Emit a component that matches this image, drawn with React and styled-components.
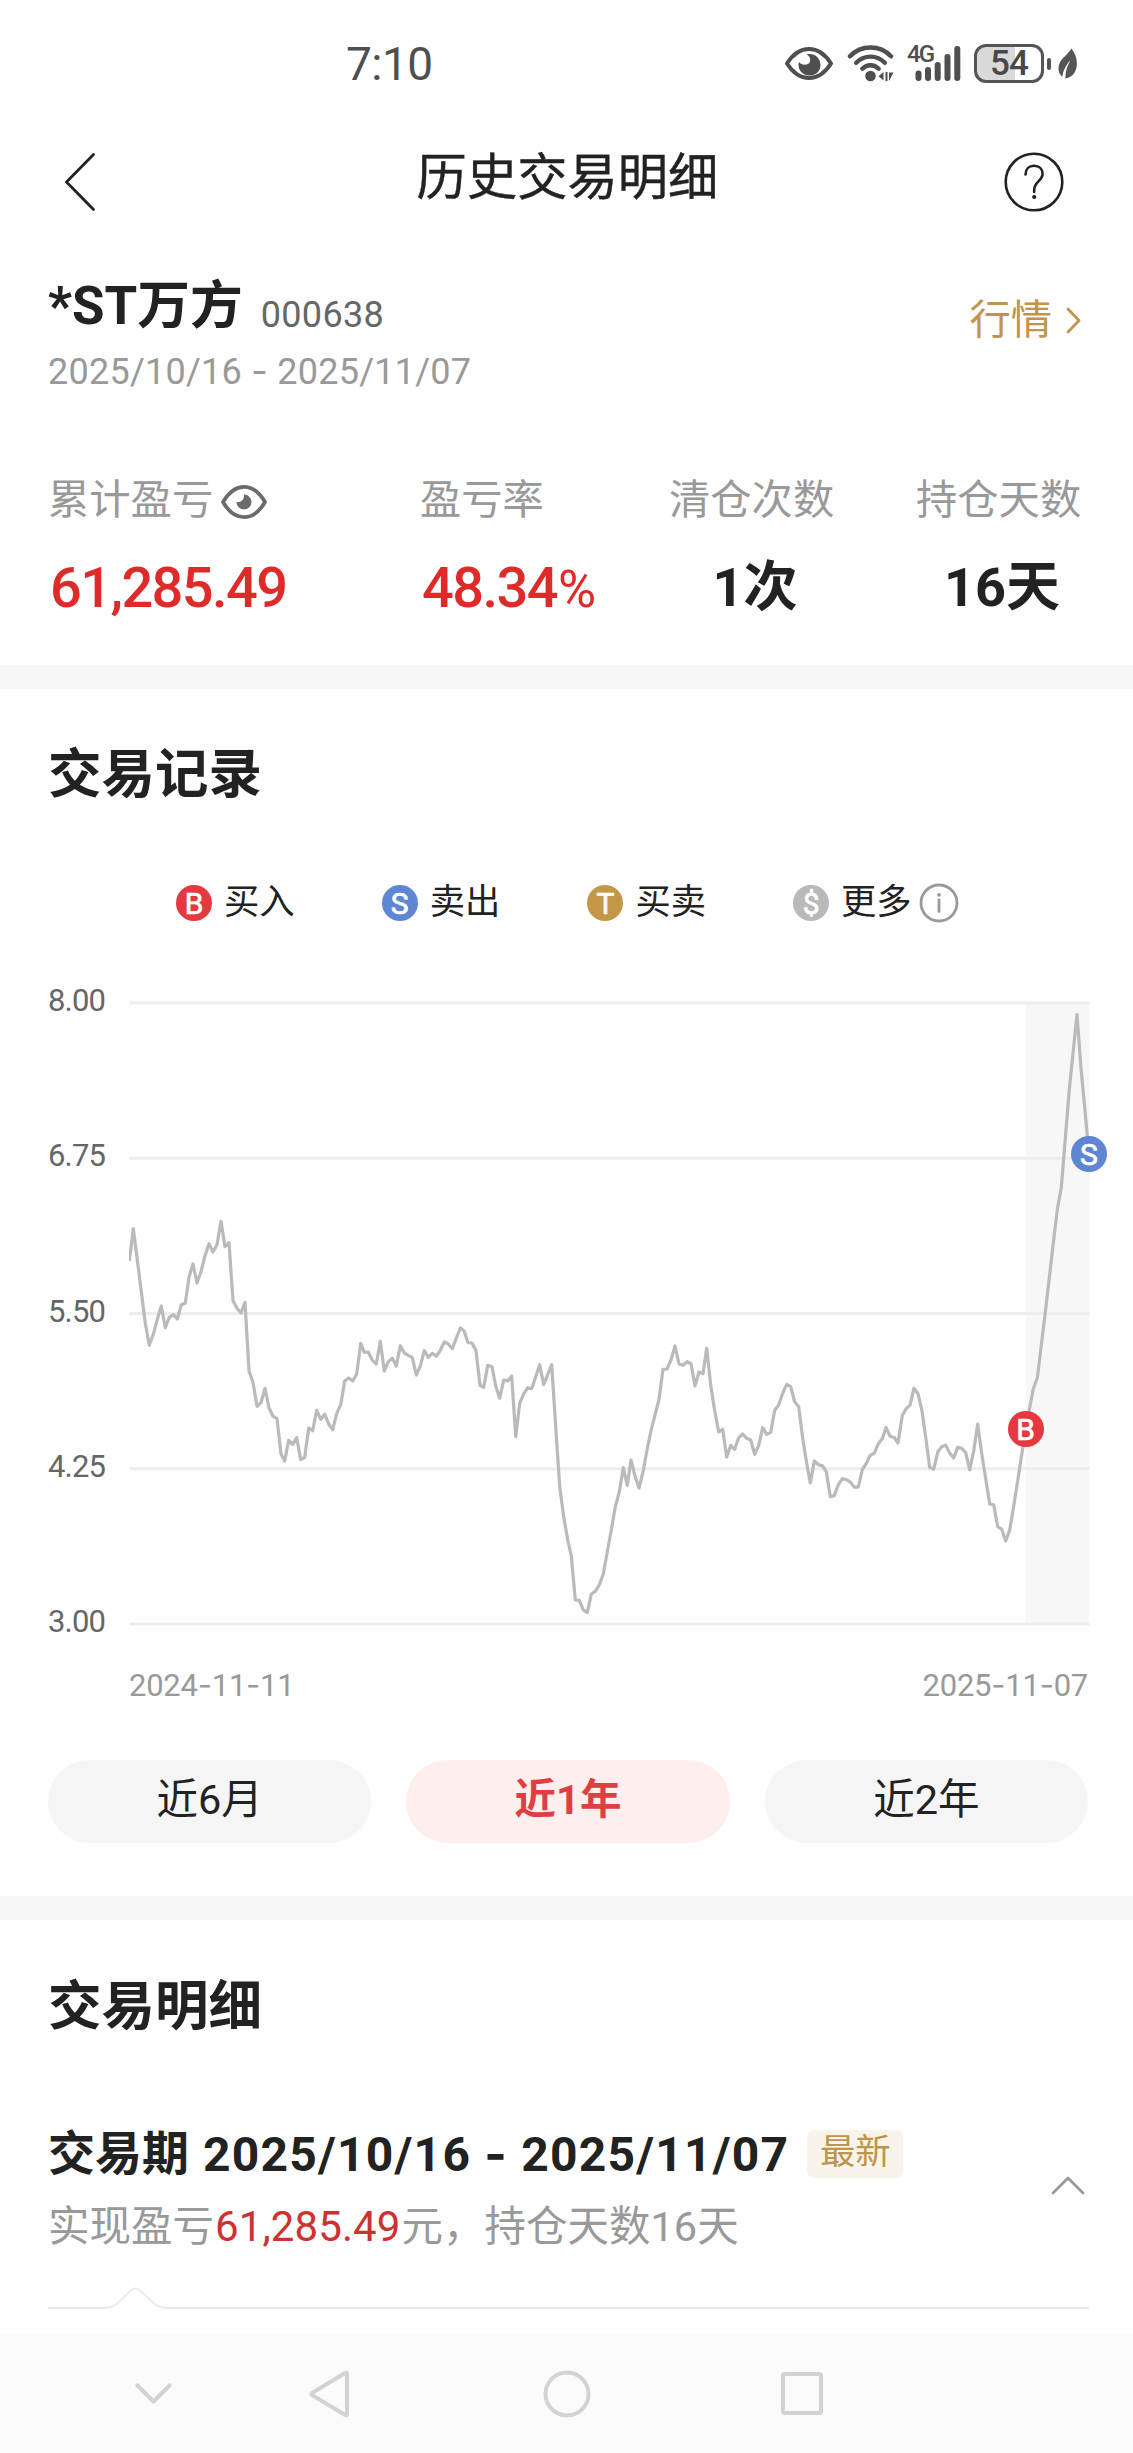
import React from 'react';
import styled, { createGlobalStyle, css } from 'styled-components';

const Global = createGlobalStyle`
  body {
    margin: 0;
    background: #fefefe;
  }
  * {
    box-sizing: border-box;
  }
`;

const Screen = styled.div`
  width: 1133px;
  height: 2453px;
  overflow: hidden;
  display: flex;
  flex-direction: column;
  background: #fefefe;
  color: #222;
  font-family: Roboto, 'Noto Sans CJK SC', sans-serif;
  white-space: nowrap;
  svg {
    display: block;
    flex: none;
  }
`;

const Dash = styled.span`
  font-family: Inter, sans-serif;
`;

/* ---------- status bar ---------- */

const StatusBar = styled.div`
  height: 127px;
  padding: 0 55px 0 346px;
  display: flex;
  align-items: center;
  justify-content: space-between;
  color: #4f4f4f;
`;

const Clock = styled.div`
  font-size: 46px;
  line-height: 54px;
  letter-spacing: -0.5px;
`;

const StatusIcons = styled.div`
  display: flex;
  align-items: center;
`;

const Signal = styled.div`
  display: flex;
  margin-left: 13px;
`;

const Network = styled.span`
  font-size: 24px;
  font-weight: 500;
  line-height: 18px;
  letter-spacing: -1.8px;
  width: 8px;
`;

const Battery = styled.div`
  margin-left: 13px;
  width: 70px;
  height: 39px;
  border: 3px solid #555;
  border-radius: 12px;
  background: linear-gradient(90deg, #d9d9d9 0 38px, #fefefe 38px);
  display: flex;
  align-items: center;
  justify-content: center;
  font-size: 35px;
  font-weight: 500;
  line-height: 33px;
  letter-spacing: -0.8px;
  color: #484848;
`;

const BatteryNub = styled.div`
  width: 4px;
  height: 12px;
  margin: 0 7px 0 3px;
  border-radius: 2px;
  background: #555;
`;

/* ---------- title bar ---------- */

const TitleBar = styled.div`
  height: 109px;
  padding: 0 69px 0 64px;
  display: grid;
  grid-template-columns: 200px 1fr 200px;
  align-items: center;
  svg:last-child {
    justify-self: end;
  }
`;

const Title = styled.h1`
  margin: -8px 0 0 7px;
  font-size: 50.3px;
  line-height: 60px;
  font-weight: 400;
  text-align: center;
  -webkit-text-stroke: 0.4px #222;
`;

/* ---------- stock summary ---------- */

const Summary = styled.section`
  height: 429px;
  padding: 40px 48px 0;
`;

const SummaryTop = styled.div`
  display: flex;
  justify-content: space-between;
`;

const StockLine = styled.div`
  display: flex;
  align-items: center;
  height: 60px;
  line-height: 60px;
`;

const StockName = styled.div`
  font-size: 52.8px;
  font-weight: 700;
`;

const StockCode = styled.div`
  margin: 17px 0 0 18px;
  font-size: 36px;
  letter-spacing: 0.3px;
  color: #666;
`;

const Period = styled.div`
  margin-top: 15px;
  font-size: 36px;
  line-height: 40px;
  letter-spacing: 0.25px;
  color: #999;
`;

const QuoteLink = styled.div`
  display: flex;
  align-items: center;
  gap: 14px;
  height: 60px;
  margin: 14px 4px 0 0;
  font-size: 41.3px;
  line-height: 60px;
  color: #bf944d;
`;

const Stats = styled.div`
  margin-top: 83px;
  display: grid;
  grid-template-columns: 372px 249px 247px 166px;
`;

const Stat = styled.div`
  display: flex;
  flex-direction: column;
  align-items: ${(p) => (p.$center ? 'center' : 'flex-start')};
  width: fit-content;
`;

const StatLabel = styled.div`
  height: 50px;
  display: flex;
  align-items: center;
  gap: 8px;
  font-size: 41.3px;
  line-height: 50px;
  color: #999;
  svg {
    margin-top: 3px;
  }
`;

const StatValue = styled.div`
  margin-top: 32px;
  height: 62px;
  line-height: 62px;
  padding-left: 7px;
  font-size: 54px;
  font-weight: 700;
  ${(p) =>
    p.$gain &&
    css`
      padding-left: 2px;
      font-size: 56px;
      font-weight: 500;
      letter-spacing: -1.6px;
      color: #df2a2a;
    `}
`;

const Percent = styled.span`
  font-size: 52px;
  font-weight: 400;
  margin-left: 1px;
`;

const Divider = styled.div`
  height: 24px;
  flex: none;
  background: #f7f7f7;
`;

/* ---------- trade chart ---------- */

const Records = styled.section`
  height: 1207px;
  padding: 55px 44px 0 48px;
`;

const SectionTitle = styled.h2`
  margin: 0;
  font-size: 53.5px;
  line-height: 62px;
  font-weight: 700;
`;

const Legend = styled.div`
  margin: 77px 0 0 128px;
  height: 40px;
  display: flex;
  align-items: center;
`;

const LegendItem = styled.div`
  width: 205.7px;
  display: flex;
  align-items: center;
  font-size: 35.3px;
  line-height: 40px;
`;

const Dot = styled.span`
  width: 36px;
  height: 36px;
  flex: none;
  border-radius: 50%;
  background: ${(p) => p.$color};
  color: #fff;
  font-size: 30px;
  line-height: 37px;
  font-weight: 400;
  text-align: center;
  -webkit-text-stroke: 0.7px #fff;
`;

const LegendText = styled.span`
  margin: -3px 7px 0 12px;
`;

const ChartBody = styled.div`
  position: relative;
  margin-top: 60px;
  height: 660px;
  display: flex;
`;

const Axis = styled.div`
  width: 81px;
  height: 657px;
  flex: none;
  display: flex;
  flex-direction: column;
  justify-content: space-between;
  font-size: 31px;
  line-height: 36px;
  letter-spacing: -0.8px;
  color: #666;
`;

const Marker = styled(Dot)`
  position: absolute;
  left: ${(p) => p.$x - 66}px;
  top: ${(p) => p.$y - 1001}px;
`;

const DateRow = styled.div`
  margin: 24px 0 0 81px;
  width: 959px;
  display: flex;
  justify-content: space-between;
  font-size: 31px;
  line-height: 36px;
  letter-spacing: -0.25px;
  color: #999;
`;

const Ranges = styled.div`
  margin-top: 56px;
  width: 1040px;
  display: grid;
  grid-template-columns: repeat(3, 1fr);
  gap: 35px;
`;

const Range = styled.button`
  height: 83px;
  padding: 0 0 3px;
  border: 0;
  border-radius: 42px;
  font: inherit;
  font-size: 41.5px;
  line-height: 60px;
  font-weight: ${(p) => (p.$active ? 700 : 400)};
  color: ${(p) => (p.$active ? '#dd3f43' : '#222')};
  background: ${(p) => (p.$active ? '#ffeeee' : '#f5f5f5')};
`;

/* ---------- trade details ---------- */

const Details = styled.section`
  height: 414px;
  padding: 56px 44px 0 48px;
`;

const Trade = styled.div`
  margin-top: 84px;
  height: 158px;
  padding-right: 4px;
  display: flex;
  justify-content: space-between;
`;

const TradeHead = styled.div`
  height: 64px;
  display: flex;
  align-items: center;
  font-size: 47px;
  line-height: 64px;
  font-weight: 700;
`;

const TradeDates = styled.span`
  margin-left: 14px;
  font-size: 48px;
  letter-spacing: 1.22px;
`;

const Badge = styled.span`
  margin-left: 18px;
  width: 96px;
  height: 48px;
  border-radius: 7px;
  background: #f8f4ec;
  color: #bf944d;
  font-size: 35.4px;
  line-height: 45px;
  font-weight: 400;
  text-align: center;
`;

const TradeNote = styled.div`
  margin-top: 15px;
  font-size: 41.5px;
  line-height: 52px;
  color: #999;
`;

const Profit = styled.span`
  margin: 0 1px;
  font-size: 42px;
  letter-spacing: 0.1px;
  color: #cd3130;
`;

const Toggle = styled.div`
  padding-top: 53px;
`;

/* ---------- navigation ---------- */

const NavBar = styled.nav`
  flex: 1;
  padding-left: 135px;
  display: grid;
  grid-template-columns: 174px 233.5px 238.5px 42px;
  align-items: center;
  background: #fbfbfb;
`;

const segments = [
  {
    x: 100, y: 1180, ky: 3,
    points: '88,243 100,146 112,240 124,335 136,430 148,496 160,463 172,418 184,378 196,443 208,412 220,404 232,417 244,374 256,370 267,292 279,252 291,309 303,275 315,227 327,191 339,216 351,194 363,124 375,200 387,188 399,362 411,385 423,399 435,367 447,573 459,607 471,679 483,668 495,625 507,684 519,709 531,716 543,822 554,843 566,781 578,793 590,773 602,839 614,832 626,744 638,752 650,691 662,718 674,703 686,732 698,749 710,701 722,674 734,603 746,594 758,603 770,582 782,490 793,517 805,516 817,541 829,552 841,484 853,573 865,545 877,535 889,558 901,497 913,519 925,526 937,533 949,585 961,558 973,512 985,532 997,520 1009,529 1021,511 1033,486 1045,492 1057,506 1069,474 1081,444',
  },
  {
    x: 460, y: 1280, ky: 3,
    points: '12,152 24,188 36,189 48,212 60,316 71,322 83,256 96,260 107,318 119,355 131,300 143,303 155,288 167,470 179,370 191,342 203,323 215,326 239,254 251,314 275,254 287,440 299,620 311,710 323,780 334,828 346,960 358,961 370,990 382,998 394,942 406,934 418,915 430,882 442,815 454,750 466,680 478,636 490,563 502,616 513,540 525,588 537,624 549,576 561,510 573,452 597,358 609,268 621,267 633,240 645,198 657,252 669,256 681,245 693,251 705,318 717,276 729,281 740,205 752,315 764,392 776,456 788,448 800,531 812,496 824,508 836,473 848,462 860,475 872,480 884,523 896,496 908,443 920,463 932,457 944,391 956,375 968,340 980,313 992,320 1004,366 1016,380 1028,475 1040,550 1051,609',
  },
  {
    x: 780, y: 980, ky: 2.376,
    points: '103,1143 115,1151 128,1155 139,1168 151,1228 163,1225 175,1199 187,1185 199,1187 211,1193 223,1205 235,1205 247,1163 258,1150 270,1130 283,1124 295,1102 307,1090 318,1063 330,1084 343,1087 354,1100 367,1035 378,1019 390,1010 402,970 414,983 426,1024 438,1092 449,1158 461,1162 474,1120 485,1109 497,1105 509,1124 521,1136 533,1110 545,1113 557,1123 569,1164 581,1119 593,1055 605,1125 617,1185 629,1245 641,1247 653,1299 665,1305 677,1333 689,1307 701,1250 713,1190 725,1128 737,1066 760,971 772,946 796,790 820,625 832,545 844,493 868,260 891,82 903,210 915,310 927,414',
  },
];

const priceLine = segments
  .flatMap(({ x, y, ky, points }) =>
    points.split(' ').map((pair) => {
      const [px, py] = pair.split(',').map(Number);
      return `${(x + px / 3).toFixed(1)},${(y + py / ky).toFixed(1)}`;
    }),
  )
  .join(' ');

const gridLines = [1003, 1158.3, 1313.5, 1468.7, 1624];
const prices = ['8.00', '6.75', '5.50', '4.25', '3.00'];

const legend = [
  { mark: 'B', color: '#e4393f', label: '买入' },
  { mark: 'S', color: '#5f86d2', label: '卖出' },
  { mark: 'T', color: '#c49648', label: '买卖' },
  { mark: '$', color: '#b9b9b9', label: '更多', info: true },
];

function StatusEye() {
  return (
    <svg width="48" height="33" viewBox="0 0 48 33">
      <path d="M2 16.500C8 7 15.500 2 24 2s16 5 22 14.500C40 26 32.500 31 24 31S8 26 2 16.500Z" fill="none" stroke="#4f4f4f" strokeWidth="4" strokeLinejoin="round" />
      <path d="M21.500 7.500c7-2 14 3 14 10.500 0 6.500-5 10.500-11 10.500S13.500 24 13.500 18c0-1.400.2-2.200.6-3 2.500 4 9.900 3.500 10.900-.5.7-3-.5-5.500-3.500-7Z" fill="#4f4f4f" />
    </svg>
  );
}

function Wifi() {
  return (
    <svg width="61" height="37" viewBox="-14 0 61 37">
      <g fill="none" stroke="#4f4f4f" strokeWidth="4.400" strokeLinecap="round">
        <path d="M3 11.300C14-.4 33-.4 44 11.300" />
        <path d="M9.200 17.800C17 9.500 30 9.500 37.800 17.800" />
        <path d="M15.300 23.800C20 19 27 19 31.700 23.800" />
      </g>
      <circle cx="23.500" cy="31" r="5.300" fill="#4f4f4f" />
      <path d="M36.500 27v8.500l-5-4.300ZM38.500 27h2v9h-2ZM42 27.500v8.500l4.500-8.500Z" fill="#4f4f4f" />
    </svg>
  );
}

function SignalBars() {
  return (
    <svg width="46" height="37" viewBox="0 0 46 37">
      <path d="M3.500 28.500V33M13 25V33M22.700 20V33M32.500 12V33M42.300 4V33" stroke="#4f4f4f" strokeWidth="6" strokeLinecap="round" />
    </svg>
  );
}

function Leaf() {
  return (
    <svg width="20" height="32" viewBox="0 0 20 32">
      <path d="M13.500.5C17 5 19.500 11 18.800 17.500 18 25 13.500 29.500 7.500 30.500 7 24 9.500 17.500 12.500 12 8 17 5 22.500 4.200 29 .5 25.500-.5 20.500 1.500 15.500 3.500 10 9.500 7 13.500.5Z" fill="#555" />
    </svg>
  );
}

function EyeIcon() {
  return (
    <svg width="46" height="36" viewBox="0 0 46 36">
      <path d="M2 18C7.500 8.500 14.500 2.800 23 2.800S38.500 8.500 44 18C38.500 27.500 31.500 33.200 23 33.200S7.500 27.500 2 18Z" fill="none" stroke="#6b6b6b" strokeWidth="3.800" strokeLinejoin="round" />
      <path d="M23 10.500A7.500 7.500 0 1 1 15.500 18C19.500 18.500 23.500 16.500 23 10.500Z" fill="#6b6b6b" />
    </svg>
  );
}

/* Dates are set in Roboto with a wider dash between their parts. */
function DateText({ children }) {
  return children
    .split('-')
    .map((part, i) => (
      <React.Fragment key={i}>
        {i > 0 && <Dash>-</Dash>}
        {part}
      </React.Fragment>
    ));
}

export default function App() {
  return (
    <Screen>
      <Global />

      <StatusBar>
        <Clock>7:10</Clock>
        <StatusIcons>
          <StatusEye />
          <Wifi />
          <Signal>
            <Network>4G</Network>
            <SignalBars />
          </Signal>
          <Battery>54</Battery>
          <BatteryNub />
          <Leaf />
        </StatusIcons>
      </StatusBar>

      <TitleBar>
        <svg width="32" height="60" viewBox="0 0 32 60">
          <path d="M29.500 2.500 2.500 30 29.500 57.500" fill="none" stroke="#222" strokeWidth="2.800" strokeLinecap="round" strokeLinejoin="round" />
        </svg>
        <Title>历史交易明细</Title>
        <svg width="60" height="60" viewBox="0 0 60 60">
          <circle cx="30" cy="30" r="28.300" fill="none" stroke="#222" strokeWidth="2.600" />
          <path d="M21.500 22.500C21.500 17 25 13.800 30 13.800s8.600 3.200 8.600 8.200c0 6.500-8.400 8-8.400 15.500v2.500" fill="none" stroke="#222" strokeWidth="2.600" strokeLinecap="round" />
          <circle cx="30.200" cy="45" r="2.100" fill="#222" />
        </svg>
      </TitleBar>

      <Summary>
        <SummaryTop>
          <div>
            <StockLine>
              <StockName>*ST万方</StockName>
              <StockCode>000638</StockCode>
            </StockLine>
            <Period>
              <DateText>2025/10/16 - 2025/11/07</DateText>
            </Period>
          </div>
          <QuoteLink>
            行情
            <svg width="15" height="28" viewBox="0 0 15 28">
              <path d="M2 3 13 14.500 2 26" fill="none" stroke="#bf944d" strokeWidth="2.800" strokeLinecap="round" strokeLinejoin="round" />
            </svg>
          </QuoteLink>
        </SummaryTop>
        <Stats>
          <Stat>
            <StatLabel>
              累计盈亏
              <EyeIcon />
            </StatLabel>
            <StatValue $gain>61,285.49</StatValue>
          </Stat>
          <Stat>
            <StatLabel>盈亏率</StatLabel>
            <StatValue $gain>
              48.34<Percent>%</Percent>
            </StatValue>
          </Stat>
          <Stat $center>
            <StatLabel>清仓次数</StatLabel>
            <StatValue>1次</StatValue>
          </Stat>
          <Stat $center>
            <StatLabel>持仓天数</StatLabel>
            <StatValue>16天</StatValue>
          </Stat>
        </Stats>
      </Summary>

      <Divider />

      <Records>
        <SectionTitle>交易记录</SectionTitle>
        <Legend>
          {legend.map((item) => (
            <LegendItem key={item.mark}>
              <Dot $color={item.color}>{item.mark}</Dot>
              <LegendText>{item.label}</LegendText>
              {item.info && (
                <svg width="40" height="40" viewBox="0 0 40 40">
                  <circle cx="20" cy="20" r="18" fill="none" stroke="#999" strokeWidth="2.800" />
                  <circle cx="20" cy="11.800" r="1.900" fill="#999" />
                  <path d="M20 17v11.500" stroke="#999" strokeWidth="2.800" strokeLinecap="round" />
                </svg>
              )}
            </LegendItem>
          ))}
        </Legend>
        <ChartBody>
          <Axis>
            {prices.map((price) => (
              <span key={price}>{price}</span>
            ))}
          </Axis>
          <svg width="962" height="660" viewBox="129 983 962 660">
            <rect x="1025.700" y="1003" width="63.500" height="621" fill="#f7f7f7" />
            {gridLines.map((y) => (
              <path key={y} d={`M129.500 ${y}H1089.500`} stroke="#ededed" strokeWidth="3" />
            ))}
            <polyline points={priceLine} fill="none" stroke="#bababa" strokeWidth="3.200" strokeLinejoin="round" />
          </svg>
          <Marker $color="#e4393f" $x={1025.5} $y={1429}>B</Marker>
          <Marker $color="#5f86d2" $x={1089} $y={1154}>S</Marker>
        </ChartBody>
        <DateRow>
          <span><DateText>2024-11-11</DateText></span>
          <span><DateText>2025-11-07</DateText></span>
        </DateRow>
        <Ranges>
          <Range>近6月</Range>
          <Range $active>近1年</Range>
          <Range>近2年</Range>
        </Ranges>
      </Records>

      <Divider />

      <Details>
        <SectionTitle>交易明细</SectionTitle>
        <Trade>
          <div>
            <TradeHead>
              交易期
              <TradeDates>
                <DateText>2025/10/16 - 2025/11/07</DateText>
              </TradeDates>
              <Badge>最新</Badge>
            </TradeHead>
            <TradeNote>
              实现盈亏<Profit>61,285.49</Profit>元，持仓天数16天
            </TradeNote>
          </div>
          <Toggle>
            <svg width="34" height="20" viewBox="0 0 34 20">
              <path d="M2 18 17 3 32 18" fill="none" stroke="#999" strokeWidth="2.800" strokeLinecap="round" strokeLinejoin="round" />
            </svg>
          </Toggle>
        </Trade>
        <svg width="1041" height="30" viewBox="48 2280 1041 30">
          <path d="M48 2308H104C110 2308 113.500 2306.500 117 2303.500L131 2290.500Q135.500 2286.500 140 2290.500L154 2303.500C157.500 2306.500 161 2308 167 2308H1089" fill="none" stroke="#ebebeb" strokeWidth="2" />
        </svg>
      </Details>

      <NavBar>
        <svg width="37" height="22" viewBox="0 0 37 22">
          <path d="M2.500 2.500 18.500 18.500 34.500 2.500" fill="none" stroke="#d3d3d3" strokeWidth="4.200" strokeLinecap="round" strokeLinejoin="round" />
        </svg>
        <svg width="42" height="48" viewBox="0 0 42 48">
          <path d="M38 3.500V44.500Q38 46 36.500 45.200L3 25Q2 24 3 23L36.500 2.800Q38 2 38 3.500Z" fill="none" stroke="#d3d3d3" strokeWidth="4" strokeLinejoin="round" />
        </svg>
        <svg width="48" height="48" viewBox="0 0 48 48">
          <circle cx="24" cy="24" r="21.500" fill="none" stroke="#d3d3d3" strokeWidth="4" />
        </svg>
        <svg width="42" height="43" viewBox="0 0 42 43">
          <rect x="2" y="2" width="38" height="39" rx="2" fill="none" stroke="#d3d3d3" strokeWidth="4" />
        </svg>
      </NavBar>
    </Screen>
  );
}
